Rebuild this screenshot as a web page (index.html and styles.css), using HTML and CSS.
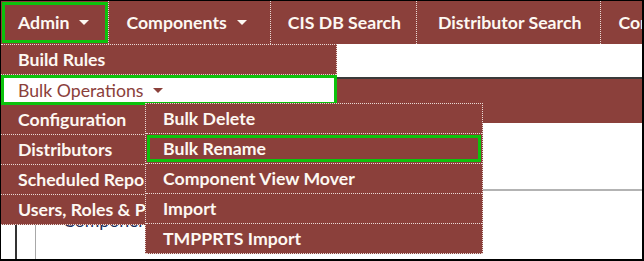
FILE: index.html
```html
<!DOCTYPE html>
<html>
<head>
<meta charset="utf-8">
<link rel="stylesheet" href="styles.css">
</head>
<body>
<div class="frame">
  <nav class="topnav">
    <ul class="menu">
      <li class="menu-item active">
        <a class="menu-link">Admin <span class="caret"></span></a>
        <ul class="submenu">
          <li class="sub-item"><a class="sub-link">Build Rules</a></li>
          <li class="sub-item hovered">
            <a class="sub-link">Bulk Operations <span class="caret dark"></span></a>
            <ul class="flyout">
              <li class="sub-item"><a class="sub-link">Bulk Delete</a></li>
              <li class="sub-item focused"><a class="sub-link">Bulk Rename</a></li>
              <li class="sub-item"><a class="sub-link">Component View Mover</a></li>
              <li class="sub-item"><a class="sub-link">Import</a></li>
              <li class="sub-item"><a class="sub-link">TMPPRTS Import</a></li>
            </ul>
          </li>
          <li class="sub-item"><a class="sub-link">Configuration</a></li>
          <li class="sub-item"><a class="sub-link">Distributors</a></li>
          <li class="sub-item"><a class="sub-link">Scheduled Reports</a></li>
          <li class="sub-item"><a class="sub-link">Users, Roles &amp; Permissions</a></li>
        </ul>
      </li>
      <li class="menu-item"><a class="menu-link comps">Components <span class="caret"></span></a></li>
      <li class="menu-item"><a class="menu-link narrow">CIS DB Search</a></li>
      <li class="menu-item"><a class="menu-link wide">Distributor Search</a></li>
      <li class="menu-item"><a class="menu-link">Configuration</a></li>
    </ul>
  </nav>
  <div class="page">
    <div class="spacer"></div>
    <div class="band"></div>
    <div class="panel"></div>
    <div class="tree">
      <div class="tree-inner">
        <div class="tree-label">Components</div>
      </div>
    </div>
  </div>
</div>
</body>
</html>
```

FILE: styles.css
```css
html, body {
  margin: 0;
  padding: 0;
  background: #fff;
}

.frame {
  width: 644px;
  height: 261px;
  box-sizing: border-box;
  border: 1px solid #000;
  border-right-width: 2px;
  border-bottom-width: 2px;
  position: relative;
  overflow: hidden;
  font-family: "Lato", "Liberation Sans", sans-serif;
  background: #fff;
}

.topnav {
  background: #8b403b;
  height: 43px;
}

.menu {
  list-style: none;
  margin: 0;
  padding: 0;
  display: flex;
  height: 43px;
  white-space: nowrap;
}

.menu-item {
  position: relative;
  flex: none;
}

.menu-link {
  display: flex;
  align-items: center;
  height: 43px;
  box-sizing: border-box;
  padding: 0 19px 0 17px;
  border-right: 1px dotted #eadad6;
  color: #fdf8f2;
  font-size: 17.7px;
  font-weight: 700;
}

.menu-link.comps {
  padding-right: 23px;
}

.menu-link.narrow {
  padding-right: 15px;
}

.menu-link.wide {
  padding-left: 21px;
}

.menu-item.active > .menu-link {
  outline: 3px solid #0cc20c;
  outline-offset: -4px;
}

.caret {
  display: inline-block;
  width: 0;
  height: 0;
  border-left: 5px solid transparent;
  border-right: 5px solid transparent;
  border-top: 5px solid #fdf8f2;
  margin-left: 10px;
}

.caret.dark {
  border-top-color: #8b403b;
}

.submenu {
  position: absolute;
  top: 43px;
  left: 0;
  width: 336px;
  box-sizing: border-box;
  list-style: none;
  margin: 0;
  padding: 0;
  background: #8b403b;
  border-top: 1px dotted #eadad6;
  border-right: 1px dotted #eadad6;
  z-index: 5;
}

.sub-item {
  position: relative;
  border-bottom: 1px dotted #eadad6;
}

.sub-link {
  display: flex;
  align-items: center;
  height: 29px;
  padding-left: 17px;
  color: #fdf8f2;
  font-size: 17.7px;
  font-weight: 700;
  overflow: hidden;
}

.sub-item.hovered {
  background: #fff;
  margin-right: -1px;
}

.sub-item.hovered > .sub-link {
  color: #8b403b;
  font-weight: 400;
  outline: 3px solid #0cc20c;
  outline-offset: -3px;
  height: 30px;
  margin-bottom: -1px;
  position: relative;
}

.flyout {
  position: absolute;
  top: 28px;
  left: 144px;
  width: 338px;
  box-sizing: border-box;
  list-style: none;
  margin: 0;
  padding: 0;
  background: #8b403b;
  border: 1px dotted #eadad6;
  border-bottom: none;
  z-index: 6;
}

.flyout .sub-item:last-child {
  border-bottom: 1px dotted #eadad6;
}

.flyout .sub-link {
  padding-left: 17px;
}

.sub-item.focused > .sub-link {
  outline: 3px solid #0cc20c;
  outline-offset: -4px;
}

.page {
  display: flex;
  flex-direction: column;
}

.spacer {
  height: 33px;
  background: #fff;
}

.band {
  height: 44px;
  background: #8b403b;
  border-top: 2px solid #3a3a3a;
}

.panel {
  height: 66px;
  border-bottom: 2px solid #b3b3b3;
  background: #fff;
}

.tree {
  margin-left: 14px;
  border-left: 2px solid #333;
  height: 80px;
}

.tree-inner {
  margin-left: 18px;
  border-left: 1px solid #a8a8a8;
  height: 80px;
  padding-left: 27px;
}

.tree-label {
  padding-top: 20px;
  font-size: 17.7px;
  line-height: 20px;
  color: #1e2f5a;
}
```
